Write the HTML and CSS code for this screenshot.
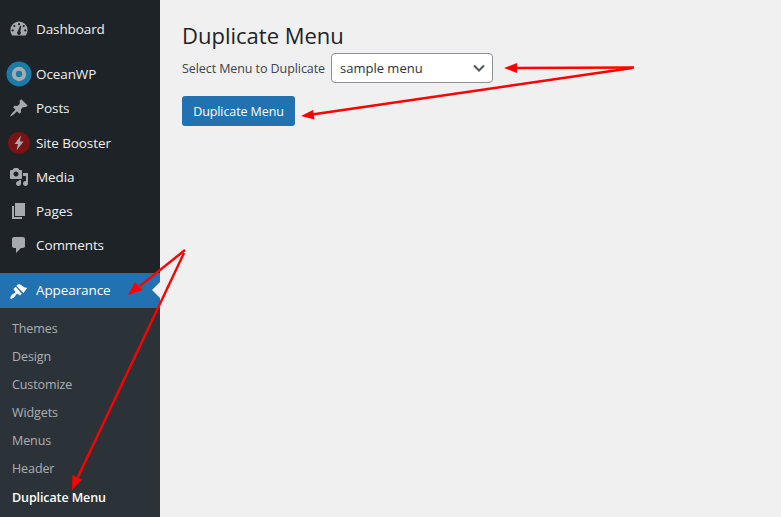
FILE: index.html
```html
<!DOCTYPE html>
<html lang="en">
<head>
<meta charset="utf-8">
<title>Duplicate Menu</title>
<link rel="stylesheet" href="styles.css">
</head>
<body>
<div class="layout">
  <nav class="sidebar">
    <ul class="menu menu-first">
      <li class="item"><span class="icon"><svg viewBox="0 0 20 20" width="20" height="20"><path class="ic" fill-rule="evenodd" d="M10 2.500a8.600 8.600 0 0 0-8.600 8.600c0 2 .7 3.900 1.900 5.400h13.400a8.600 8.600 0 0 0 1.900-5.400A8.600 8.600 0 0 0 10 2.500zM10 4.100a1.100 1.100 0 1 1 0 2.200 1.100 1.100 0 0 1 0-2.200zM5.300 6a1.100 1.100 0 1 1 0 2.200 1.100 1.100 0 0 1 0-2.200zM14.700 6a1.100 1.100 0 1 1 0 2.200 1.100 1.100 0 0 1 0-2.200zM3.700 10.300a1.100 1.100 0 1 1 0 2.200 1.100 1.100 0 0 1 0-2.200zM16.300 10.300a1.100 1.100 0 1 1 0 2.200 1.100 1.100 0 0 1 0-2.200zM12.300 7.200l-1 5.300a1.900 1.900 0 1 1-2.600 0l2.400-5.700z"/></svg></span><span>Dashboard</span></li>
    </ul>
    <ul class="menu menu-group">
      <li class="item"><span class="icon"><svg viewBox="0 0 26 26" width="26" height="26"><circle cx="13" cy="13" r="12.500" fill="#1a7ba6"/><circle cx="13" cy="13" r="5.200" fill="none" stroke="#a7aaad" stroke-width="4"/></svg></span><span>OceanWP</span></li>
      <li class="item"><span class="icon"><svg viewBox="0 0 20 20" width="20" height="20"><path class="ic" d="M10.440 3.020l1.820-1.820 6.360 6.350-1.830 1.820c-1.050-.68-2.480-.57-3.410.36l-.75.75c-.92.93-1.040 2.350-.35 3.410l-1.830 1.820-2.410-2.410-2.800 2.790c-.42.42-3.380 2.710-3.800 2.290s1.860-3.390 2.280-3.810l2.790-2.790L4.100 9.360l1.830-1.820c1.050.69 2.480.57 3.400-.36l.75-.75c.93-.92 1.050-2.350.36-3.410z"/></svg></span><span>Posts</span></li>
      <li class="item item-tall"><span class="icon"><svg viewBox="0 0 22 22" width="22" height="22"><circle cx="11" cy="11" r="11" fill="#7a1315"/><path class="ic" d="M13 3.500L6.500 12H10l-1.500 6.500L15.500 9.500H11.800z"/></svg></span><span>Site Booster</span></li>
      <li class="item"><span class="icon"><svg viewBox="0 0 20 20" width="20" height="20"><path class="ic" fill-rule="evenodd" d="M13 11V4c0-.55-.45-1-1-1h-1.670L9 1H5L3.670 3H2c-.55 0-1 .45-1 1v7c0 .55.45 1 1 1h10c.55 0 1-.45 1-1zM7 4.500c1.380 0 2.500 1.120 2.500 2.500S8.380 9.500 7 9.500 4.500 8.380 4.500 7 5.620 4.500 7 4.500zM14 6h5v10.500c0 1.380-1.120 2.500-2.500 2.500S14 17.880 14 16.500s1.120-2.500 2.500-2.500c.17 0 .34.02.5.05V9h-3V6zm-4 8.050V13h2v3.500c0 1.380-1.120 2.500-2.500 2.500S7 17.880 7 16.500 8.120 14 9.500 14c.17 0 .34.02.5.05z"/></svg></span><span>Media</span></li>
      <li class="item"><span class="icon"><svg viewBox="0 0 20 20" width="20" height="20"><path class="ic" d="M6 15V2h10v13H6zm-1 1h8v2H3V5h2v11z"/></svg></span><span>Pages</span></li>
      <li class="item"><span class="icon"><svg viewBox="0 0 20 20" width="20" height="20"><path class="ic" d="M5 2h9c1.100 0 2 .9 2 2v7c0 1.100-.9 2-2 2h-2l-5 5v-5H5c-1.100 0-2-.9-2-2V4c0-1.100.9-2 2-2z"/></svg></span><span>Comments</span></li>
    </ul>
    <div class="current">
      <div class="item item-active"><span class="icon"><svg viewBox="0 0 20 20" width="20" height="20"><path class="ic-on" d="M18.500 5.500c-1.600.6-2.900.2-4-.7-1.100-.8-2-1.800-3.300-2.300-1.200-.4-2.200-.3-2.800.3L7.400 3.900l7.100 7.100zM6.700 4.700L4.900 6.500c-.4.4-.4 1 0 1.400l1.100 1.100c.4.4.4 1 0 1.400-.6.6-1.500 1.100-2.200 1.700-.4.300-.7.500-1 .8-1.350 1.350-1.800 3.100-1.300 3.600s2.250.05 3.600-1.300c.3-.3.6-.65.85-1 .6-.8 1.100-1.650 1.700-2.250.4-.4 1-.4 1.400 0l1.050 1.050c.4.4 1 .4 1.400 0l1.300-1.300z"/></svg></span><span>Appearance</span></div>
      <ul class="submenu">
        <li class="sub">Themes</li>
        <li class="sub">Design</li>
        <li class="sub">Customize</li>
        <li class="sub">Widgets</li>
        <li class="sub">Menus</li>
        <li class="sub">Header</li>
        <li class="sub sub-current">Duplicate Menu</li>
      </ul>
    </div>
  </nav>
  <main class="content">
    <h1 class="title">Duplicate Menu</h1>
    <form class="form">
      <div class="field">
        <label class="label" for="menu">Select Menu to Duplicate</label>
        <div class="select" id="menu"><span>sample menu</span><svg viewBox="0 0 16 16" width="16" height="16"><path d="M3 5.500l5 5 5-5" fill="none" stroke="#50575e" stroke-width="2"/></svg></div>
      </div>
      <div class="button">Duplicate Menu</div>
    </form>
  </main>
</div>
<svg class="arrows" viewBox="0 0 781 517" width="781" height="517">
  <g stroke="#f00" stroke-width="2.400" fill="none">
    <path d="M634 67.500L515 68"/>
    <path d="M632 68L312 114.500"/>
    <path d="M185 250L140 286"/>
    <path d="M184 253L78 477"/>
  </g>
  <g fill="#f00">
    <path d="M504 68l13-5v10z"/>
    <path d="M301 116l12-6 1.500 9.500z"/>
    <path d="M128 295l7-13 7.500 8z"/>
    <path d="M72 490l.5-15 9.500 4.500z"/>
  </g>
</svg>
</body>
</html>
```
FILE: styles.css
```css
* { box-sizing: border-box; }
html, body { margin: 0; height: 100%; overflow: hidden; }
body { background: #f0f0f1; font-family: "Open Sans", "Noto Sans", sans-serif; color: #3c434a; }
.layout { display: flex; height: 517px; }
.sidebar { width: 160px; flex: none; background: #1d2327; padding-top: 12px; display: flex; flex-direction: column; }
.menu { list-style: none; margin: 0; padding: 0; }
.menu-group { margin-top: 11px; }
.item { display: flex; align-items: center; height: 34px; color: #f0f0f1; font-size: 13.500px; letter-spacing: -.1px; }
.item-tall { height: 35px; }
.icon { width: 36px; flex: none; display: flex; justify-content: center; align-items: center; padding-left: 1px; }
.icon svg { display: block; }
.ic { fill: #a7aaad; }
.ic-on { fill: #fff; }
.current { margin-top: 11px; flex: 1; background: #2c3338; }
.item-active { position: relative; height: 35px; padding-bottom: 1px; background: #2271b1; color: #fff; }
.item-active .icon { padding-top: 3px; }
.item-active::after { content: ""; position: absolute; right: 0; top: 9px; border: 8px solid transparent; border-right-color: #f0f0f1; border-left: 0; }
.submenu { list-style: none; margin: 0; padding: 6px 0 0; }
.sub { display: flex; align-items: center; height: 28px; padding-left: 12px; font-size: 12.500px; letter-spacing: -.1px; color: #c3c4c7; opacity: .85; }
.sub-current { height: 30px; color: #fff; font-weight: 600; opacity: 1; }
.content { flex: 1; padding: 21px 0 0 22px; }
.title { margin: 0; font-size: 22px; font-weight: 400; line-height: 29px; color: #1d2327; }
.form { display: flex; flex-direction: column; align-items: flex-start; margin-top: 3px; }
.field { display: flex; align-items: center; gap: 6px; }
.label { font-size: 12.500px; letter-spacing: -.08px; color: #3c434a; }
.select { width: 162px; height: 30px; display: flex; justify-content: space-between; align-items: center; padding: 0 5px 0 8px; background: #fff; border: 1px solid #8c8f94; border-radius: 4px; font-size: 13px; color: #2c3338; }
.button { margin-top: 13px; width: 113px; height: 30px; display: flex; align-items: center; justify-content: center; background: #2271b1; border-radius: 3px; color: #fff; font-size: 12.500px; letter-spacing: -.1px; }
.arrows { position: absolute; left: 0; top: 0; pointer-events: none; }
```
